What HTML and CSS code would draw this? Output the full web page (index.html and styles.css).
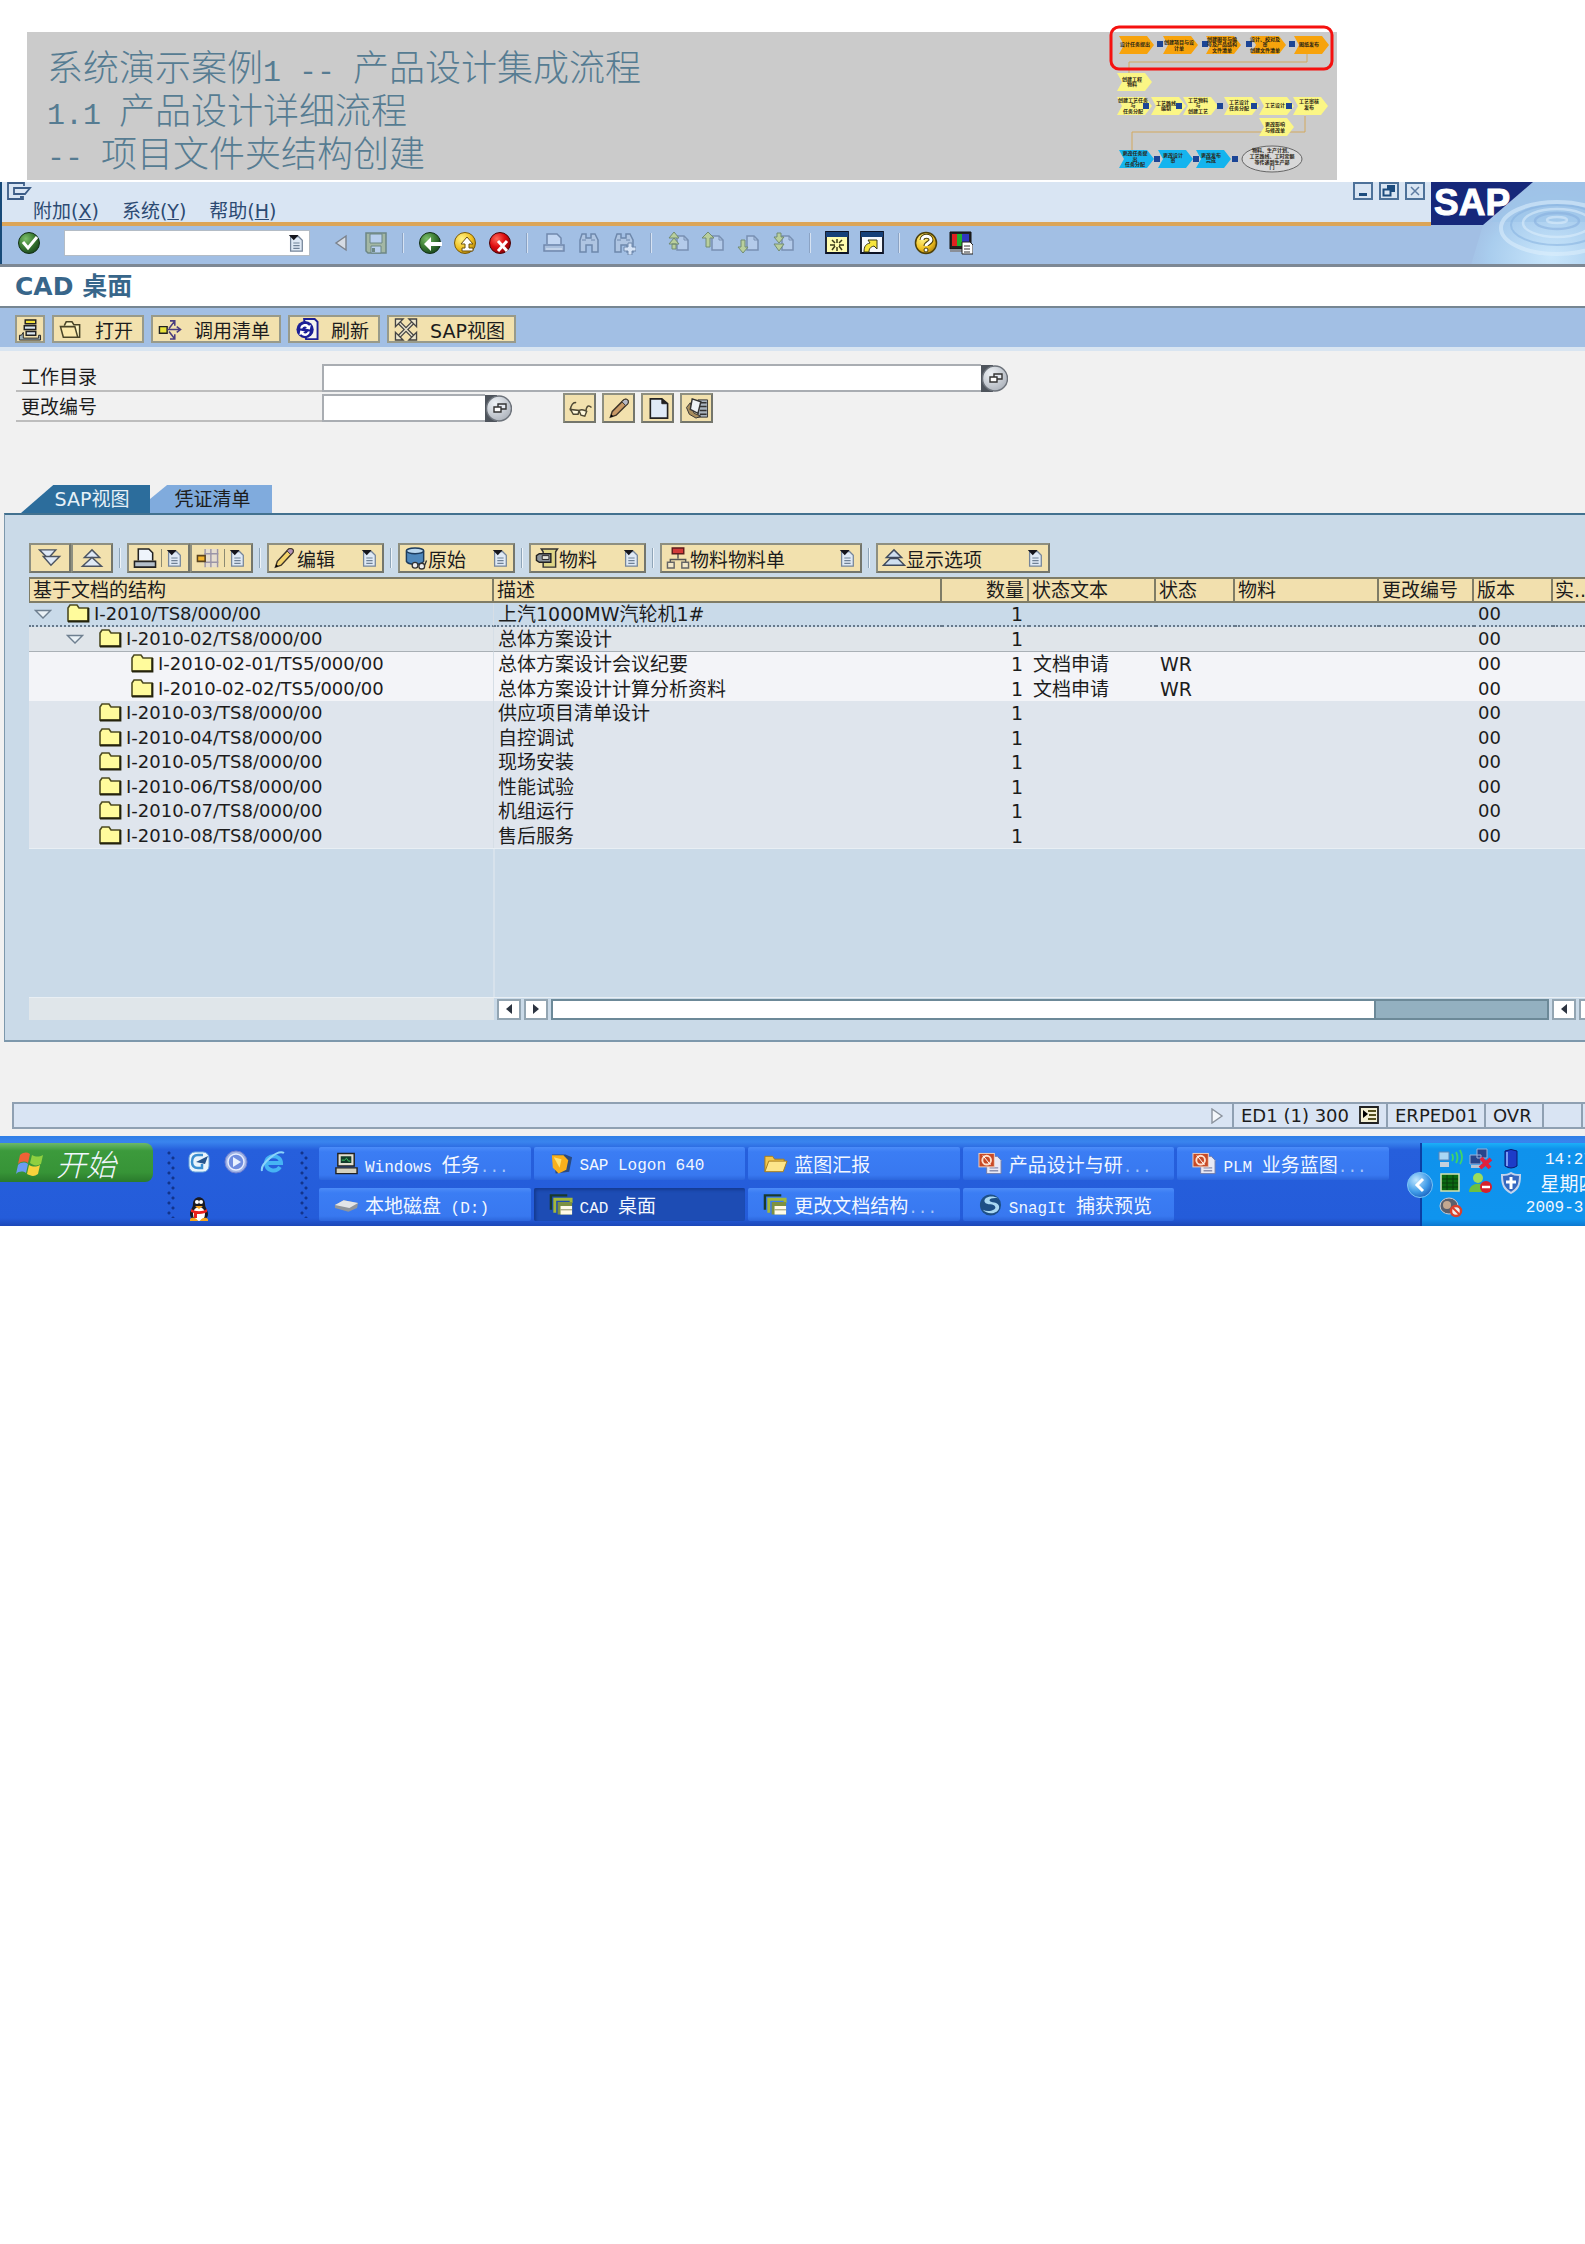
FILE: index.html
```html
<!DOCTYPE html>
<html lang="zh-CN">
<head>
<meta charset="utf-8">
<title>CAD 桌面</title>
<link rel="stylesheet" href="styles.css">
</head>
<body>
<svg class="defs" aria-hidden="true">
  <defs>
    <radialGradient id="gGreen" cx=".35" cy=".3" r=".8"><stop offset="0" stop-color="#7cc06a"/><stop offset=".5" stop-color="#3c7c34"/><stop offset="1" stop-color="#16401a"/></radialGradient>
    <radialGradient id="gYellow" cx=".35" cy=".3" r=".8"><stop offset="0" stop-color="#fff48a"/><stop offset=".6" stop-color="#f0c020"/><stop offset="1" stop-color="#a87a08"/></radialGradient>
    <radialGradient id="gRed" cx=".35" cy=".3" r=".8"><stop offset="0" stop-color="#ff6a5a"/><stop offset=".5" stop-color="#dc0a0e"/><stop offset="1" stop-color="#7c0408"/></radialGradient>
    <radialGradient id="gGrey" cx=".35" cy=".3" r=".8"><stop offset="0" stop-color="#eef2f6"/><stop offset="1" stop-color="#a9afb8"/></radialGradient>
    <radialGradient id="gBlue" cx=".35" cy=".3" r=".8"><stop offset="0" stop-color="#bfe6ff"/><stop offset=".6" stop-color="#3f9be8"/><stop offset="1" stop-color="#1559b8"/></radialGradient>
    <radialGradient id="gWater" cx=".7" cy=".9" r=".9"><stop offset="0" stop-color="#c9e6fb"/><stop offset=".6" stop-color="#a9cdee"/><stop offset="1" stop-color="#a2bfe4" stop-opacity="0"/></radialGradient>
  </defs>
  <symbol id="doc" viewBox="0 0 16 20"><path d="M2 3h9l4 4v12H2z" fill="#dfe9f5" stroke="#75859a" stroke-width="1.400"/><path d="M5 10h7M5 13h7M5 16h7" stroke="#6f8196" stroke-width="1.300"/><path d="M0 1h11L5.500 7z" fill="#15151c"/></symbol>
  <symbol id="folder" viewBox="0 0 24 20"><path d="M2 18V5l2-3h7l2 3h9v13z" fill="#fffb9c" stroke="#4d4b22" stroke-width="1.600"/><path d="M22.500 5v13.500H2" fill="none" stroke="#24230c" stroke-width="1.800"/></symbol>
  <symbol id="tri" viewBox="0 0 18 12"><path d="M1.500 1.500h15L9 9z" fill="#eaf1f6" stroke="#6e7f90" stroke-width="1.400"/></symbol>
  <symbol id="page" viewBox="0 0 24 24"><path d="M11 5h7l4 4v10H11z" fill="#b4cbea" stroke="#7890b2" stroke-width="1.500"/><path d="M18 5v4h4" fill="none" stroke="#7890b2"/></symbol>
  <symbol id="bino" viewBox="0 0 24 24"><path d="M3 21V9l2-6h4v4h5V3h4l3 6v12h-6v-7H9v7z" fill="#afc5e2" stroke="#6e88ac" stroke-width="1.500"/><path d="M5 9h4m5 0h4" stroke="#6e88ac"/></symbol>
  <symbol id="ppt" viewBox="0 0 26 24"><path d="M9 4h11l4 4v14H9z" fill="#e9e9f4" stroke="#6f7aa8"/><path d="M12 16h9M12 19h9" stroke="#8a8fb0" stroke-width="1.500"/><rect x="1" y="1" width="16" height="14" fill="#c84a26" stroke="#f0d0c0"/><circle cx="9" cy="8" r="4.500" fill="none" stroke="#ffe0cc" stroke-width="2"/><path d="M5 3l8 10" stroke="#fff"/></symbol>
  <symbol id="sapwin" viewBox="0 0 26 24"><path d="M2 17V2h17" fill="none" stroke="#193a2c" stroke-width="2.500"/><path d="M6 20V6h17v4" fill="none" stroke="#a4b838" stroke-width="3"/><path d="M9 9h15v13H9z" fill="#7d9142"/><path d="M12 13h12v9H12z" fill="#fffbe8"/><path d="M12 17h12" stroke="#8b8b60"/></symbol>
  <symbol id="arr" viewBox="0 0 36 19"><path d="M0 0H28L35 9 28 18H0L5 9z"/></symbol>
</svg>

<header class="slide">
  <h1>系统演示案例<span class="latin">1 -- </span>产品设计集成流程</h1>
  <h2><span class="latin">1.1 </span>产品设计详细流程</h2>
  <h2><span class="latin">-- </span>项目文件夹结构创建</h2>
  <svg class="flowmap" viewBox="0 0 230 152" role="img" aria-label="流程图">
    <path d="M200 30v8H22v12M198 92v16H25v18" fill="none" stroke="#d3a95e"/>
    <g fill="#f7a30c"><use href="#arr" x="11" y="12" width="38" height="19"/><use href="#arr" x="55" y="12" width="38" height="19"/><use href="#arr" x="98" y="12" width="38" height="19"/><use href="#arr" x="143" y="12" width="38" height="19"/><use href="#arr" x="186" y="12" width="38" height="19"/></g>
    <g fill="#fbf685"><use href="#arr" x="10" y="49" width="36" height="19"/><use href="#arr" x="10" y="73" width="36" height="19"/><use href="#arr" x="44" y="73" width="36" height="19"/><use href="#arr" x="76" y="73" width="36" height="19"/><use href="#arr" x="117" y="73" width="36" height="19"/><use href="#arr" x="152" y="73" width="36" height="19"/><use href="#arr" x="186" y="73" width="36" height="19"/><use href="#arr" x="152" y="94" width="36" height="19"/></g>
    <g fill="#15b4ee"><use href="#arr" x="12" y="126" width="36" height="19"/><use href="#arr" x="51" y="126" width="36" height="19"/><use href="#arr" x="89" y="126" width="36" height="19"/></g>
    <g fill="#1c4596"><path d="M50 17h6v6h-6zM95 17h6v6h-6zM139 17h6v6h-6zM182 17h6v6h-6zM36 79h6v6h-6zM69 79h6v6h-6zM110 79h6v6h-6zM144 79h6v6h-6zM179 79h6v6h-6zM47 132h6v6h-6zM86 132h6v6h-6zM125 132h6v6h-6z"/></g>
    <ellipse cx="165" cy="135" rx="30" ry="13" fill="#d8d8d8" stroke="#666"/>
    <g class="maptext" text-anchor="middle">
      <text x="28" y="22">设计任务提出</text><text x="72" y="20">创建项目与设</text><text x="72" y="26">计单</text><text x="115" y="17">创建图号与编</text><text x="115" y="22">号及产品结构</text><text x="115" y="28">文件清单</text><text x="158" y="17">设计、校对及</text><text x="158" y="22">审</text><text x="158" y="28">创建文件清单</text><text x="202" y="22">图纸发布</text>
      <text x="25" y="57">创建工程</text><text x="25" y="62">物料</text><text x="26" y="78">创建工艺任务</text><text x="26" y="83">与</text><text x="26" y="89">任务分配</text><text x="59" y="81">工艺路线</text><text x="59" y="86">编制</text><text x="91" y="78">工艺物料</text><text x="91" y="83">与</text><text x="91" y="89">创建工艺</text><text x="132" y="80">工艺设计</text><text x="132" y="86">任务分配</text><text x="168" y="83">工艺设计</text><text x="202" y="79">工艺审核</text><text x="202" y="85">发布</text><text x="168" y="102">更改影响</text><text x="168" y="108">与修改单</text>
      <text x="28" y="131">更改任务提</text><text x="28" y="137">出</text><text x="28" y="142">任务分配</text><text x="66" y="133">更改设计</text><text x="66" y="138">审</text><text x="104" y="133">更改发布</text><text x="104" y="138">完成</text><text x="165" y="128">物料、生产计划、</text><text x="165" y="134">工艺路线、工时定额</text><text x="165" y="140">等传递到生产部</text><text x="165" y="145">门</text>
    </g>
    <rect x="4" y="3" width="221" height="42" rx="8" fill="none" stroke="#f5110f" stroke-width="3"/>
  </svg>
</header>

<main class="sap">
  <div class="top">
    <div class="top-left">
      <div class="titlebar">
        <div class="menus">
          <svg class="sysicon" viewBox="0 0 26 18" aria-hidden="true"><path d="M14 15h3v2H2V1h16v3" fill="none" stroke="#3c5c86" stroke-width="1.800"/><path d="M8 6h16l-5 6H8z" fill="#dbe6f4" stroke="#3c5c86" stroke-width="1.800"/></svg>
          <nav class="menu"><a href="#">附加(<u>X</u>)</a><a href="#">系统(<u>Y</u>)</a><a href="#">帮助(<u>H</u>)</a></nav>
        </div>
        <div class="winbtns">
          <button aria-label="最小化"><svg viewBox="0 0 18 16"><path d="M5 10h8v3H5z" fill="#1d4c7e"/></svg></button>
          <button aria-label="还原"><svg viewBox="0 0 18 16"><path d="M7 2h8v7H7z" fill="#1d4c7e"/><path d="M3.500 6.500h7v6h-7z" fill="#dbe6f4" stroke="#1d4c7e" stroke-width="2"/></svg></button>
          <button aria-label="关闭"><svg viewBox="0 0 18 16"><path d="M5 4l8 8m0-8l-8 8" stroke="#5d7ca3" stroke-width="1.500"/></svg></button>
        </div>
      </div>
      <div class="stdbar">
        <button class="ib" aria-label="确认"><svg viewBox="0 0 24 24"><circle cx="12" cy="12" r="10.500" fill="url(#gGreen)" stroke="#123016"/><path d="M6 11l5 6 9-11" fill="none" stroke="#fff" stroke-width="3"/></svg></button>
        <div class="cmd"><input aria-label="命令"><svg class="dd"><use href="#doc"/></svg></div>
        <button class="ib" aria-label="隐藏"><svg viewBox="0 0 24 24"><path d="M17 5v14L7 12z" fill="#d5dbe4" stroke="#7b828c" stroke-width="1.400"/></svg></button>
        <button class="ib" aria-label="保存"><svg viewBox="0 0 24 24"><path d="M2 2h20v20H4l-2-2z" fill="#a3b7a4" stroke="#6d8784" stroke-width="1.500"/><path d="M6 3h12v9H6zM7 15h10v7H7z" fill="#b8cfee" stroke="#6d8784"/><path d="M8 17h3v4H8z" fill="#6d8784"/></svg></button>
        <i class="sep"></i>
        <button class="ib" aria-label="返回"><svg viewBox="0 0 24 24"><circle cx="12" cy="12" r="10.500" fill="url(#gGreen)" stroke="#123016"/><path d="M6 13l7-7v5h11v4H13v5z" fill="#fff"/></svg></button>
        <button class="ib" aria-label="退出"><svg viewBox="0 0 24 24"><circle cx="12" cy="12" r="10.500" fill="url(#gYellow)" stroke="#7a5a08"/><path d="M14 6l6 7h-4v4h4v3H9v-3h3v-4H8z" fill="#fff" stroke="#6b500c"/></svg></button>
        <button class="ib" aria-label="取消"><svg viewBox="0 0 24 24"><circle cx="12" cy="12" r="10.500" fill="url(#gRed)" stroke="#4c0406"/><path d="M10 10l9 10m0-10l-9 10" stroke="#fff" stroke-width="3"/></svg></button>
        <i class="sep"></i>
        <button class="ib" aria-label="打印"><svg viewBox="0 0 24 24"><path d="M5 13V3h10l4 4v6" fill="#c2d6f2" stroke="#7189ad" stroke-width="1.500"/><path d="M2 14h20v6H2z" fill="#a9bfdd" stroke="#7189ad" stroke-width="1.500"/><path d="M4 18h16" stroke="#dde8f6"/></svg></button>
        <button class="ib" aria-label="查找"><svg><use href="#bino"/></svg></button>
        <button class="ib" aria-label="继续查找"><svg viewBox="0 0 24 24"><use href="#bino"/><path d="M16 12h4v4h4v4h-4v4h-4v-4h-4v-4h4z" fill="#d5e3f6" stroke="#6e88ac"/></svg></button>
        <i class="sep"></i>
        <button class="ib" aria-label="首页"><svg viewBox="0 0 24 24"><use href="#page"/><path d="M8 1l5 6H3zM8 7l5 6H3zM6 13h4v5H6z" fill="#b9cf9c" stroke="#728c72"/></svg></button>
        <button class="ib" aria-label="上一页"><svg viewBox="0 0 24 24"><use href="#page"/><path d="M7 1l6 6h-4v9H5V7H1z" fill="#b9cf9c" stroke="#728c72"/></svg></button>
        <button class="ib" aria-label="下一页"><svg viewBox="0 0 24 24"><use href="#page"/><path d="M5 9h4v7h3l-5 6-5-6h3z" fill="#b9cf9c" stroke="#728c72"/></svg></button>
        <button class="ib" aria-label="末页"><svg viewBox="0 0 24 24"><use href="#page"/><path d="M6 2h4v4h3l-5 6-5-6h3zM3 13h10l-5 7z" fill="#b9cf9c" stroke="#728c72"/></svg></button>
        <i class="sep"></i>
        <button class="ib" aria-label="新建会话"><svg viewBox="0 0 24 24"><path d="M1 1h22v21H1z" fill="#fffcae" stroke="#0c1224" stroke-width="1.800"/><path d="M1 1h22v5H1z" fill="#164078"/><path d="M12 8v4m0 4v4m-7-6h5m4 0h5M7 9l3 3m4 3l3 4m0-10l-3 3m-4 3l-3 4" stroke="#3b3a18" stroke-width="1.500"/></svg></button>
        <button class="ib" aria-label="快捷方式"><svg viewBox="0 0 24 24"><path d="M1 1h22v21H1z" fill="#f7f9fc" stroke="#0c1224" stroke-width="1.800"/><path d="M1 1h22v5H1z" fill="#164078"/><path d="M4 21c0-6 2-8 6-9l-2-3h9v9l-3-3c-4 1-5 3-5 6z" fill="#f8e63c" stroke="#3b3a18"/></svg></button>
        <i class="sep"></i>
        <button class="ib" aria-label="帮助"><svg viewBox="0 0 24 24"><circle cx="12" cy="12" r="10.500" fill="url(#gYellow)" stroke="#4d400a" stroke-width="1.500"/><path d="M8 9c0-5 9-5 9 0 0 3-5 3-5 6" fill="none" stroke="#4d400a" stroke-width="5"/><path d="M8 9c0-5 9-5 9 0 0 3-5 3-5 6" fill="none" stroke="#fff" stroke-width="3"/><circle cx="12" cy="19" r="2" fill="#fff" stroke="#4d400a"/></svg></button>
        <button class="ib" aria-label="布局"><svg viewBox="0 0 24 24"><path d="M1 1h21v17H1z" fill="#222" stroke="#111"/><path d="M3 3h5v12H3z" fill="#e02020"/><path d="M8 3h5v12H8z" fill="#20b030"/><path d="M13 3h7v12h-7z" fill="#3038c0"/><path d="M1 18h15v3H1z" fill="#8a8f98"/><path d="M13 11h8l3 3v9H13z" fill="#fff" stroke="#222"/><path d="M15 15h6m-6 3h6m-6 3h6" stroke="#333"/></svg></button>
      </div>
    </div>
    <svg class="logo" viewBox="0 0 154 83" preserveAspectRatio="xMaxYMin slice" role="img" aria-label="SAP">
      <rect width="154" height="83" fill="#a2bfe4"/><path d="M102 0h52v83H40L52 43z" fill="url(#gWater)"/><path d="M102 0h52v40H60z" fill="#9cc5ea" opacity=".6"/>
      <g fill="none" stroke="#dff0fd" stroke-width="2.500" opacity=".55"><ellipse cx="126" cy="38" rx="10" ry="3"/><ellipse cx="126" cy="39" rx="22" ry="8" stroke="#86aede"/><ellipse cx="126" cy="41" rx="34" ry="14"/><ellipse cx="126" cy="43" rx="46" ry="20" stroke="#86b2e0" stroke-width="2"/><ellipse cx="126" cy="46" rx="56" ry="26" stroke-width="4"/></g>
      <path d="M0 0h102L52 43H0z" fill="#16287a"/>
      <text x="3" y="33" class="logotext">SAP</text>
    </svg>
  </div>

  <h2 class="apptitle">CAD 桌面</h2>

  <div class="appbar">
    <button class="btn sq" aria-label="列表"><svg class="ic" viewBox="0 0 24 24"><path d="M7 2h11v4H7z" fill="#f4e23c" stroke="#222" stroke-width="1.500"/><path d="M6 8h12v4H6zM8 14h10v4H8z" fill="#dbe6ee" stroke="#222" stroke-width="1.500"/><path d="M5 15v6h16v-3h2v5H1v-5h2z" fill="#9db0b8" stroke="#222"/></svg></button>
    <button class="btn"><svg class="ic" viewBox="0 0 24 24"><path d="M5 8l2-4h6l2 3h6v13h-3" fill="#fff6c4" stroke="#4a4528" stroke-width="1.600"/><path d="M1 9h15l3 11H4z" fill="#fbe9ac" stroke="#4a4528" stroke-width="1.600"/></svg>打开</button>
    <button class="btn"><svg class="ic" viewBox="0 0 24 24"><path d="M1 9h8v7H1z" fill="#e9e23a" stroke="#222" stroke-width="1.500"/><path d="M9 12h13m-3-3l4 3-4 3M11 11l6-8m-5 0h5v5M11 14l6 8m-5 0h5v-5" fill="none" stroke="#4a3c80" stroke-width="1.600"/></svg>调用清单</button>
    <button class="btn"><svg class="ic" viewBox="0 0 24 24"><path d="M9 1h11l3 3v18H11z" fill="#f5f4ee" stroke="#1c1f96" stroke-width="2"/><circle cx="10" cy="12" r="9" fill="#1c1f96"/><path d="M5 11c0-5 7-6 9-3l2-1-1 5-5-1 2-1c-2-2-4-1-5 1zM15 14c-1 5-6 6-9 3l-2 1 1-5 5 1-2 1c2 2 4 1 5-1z" fill="#fff"/></svg>刷新</button>
    <button class="btn"><svg class="ic" viewBox="0 0 24 24"><path d="M4 4l16 16M20 4L4 20" stroke="#444" stroke-width="4"/><path d="M4 4l16 16M20 4L4 20" stroke="#e8e2cc" stroke-width="1.500"/><path d="M1 9V1h8zM15 1h8v8zM23 15v8h-8zM9 23H1v-8z" fill="#eee7cc" stroke="#444" stroke-width="1.400"/></svg>SAP视图</button>
  </div>

  <form class="form">
    <div class="row">
      <label for="dir">工作目录</label><input id="dir" class="long"><button type="button" class="match" aria-label="选择"><svg viewBox="0 0 27 27"><path d="M0 0h12v27H0z" fill="#4e545c"/><circle cx="14" cy="13.500" r="12.500" fill="url(#gGrey)" stroke="#6c727a" stroke-width="1.400"/><path d="M13 9h8v5h-8z" fill="#e4e9f0" stroke="#333" stroke-width="1.400"/><path d="M9 12h7v5H9z" fill="#fff" stroke="#333" stroke-width="1.400"/></svg></button>
    </div>
    <div class="row">
      <label for="chg">更改编号</label><input id="chg" class="short"><button type="button" class="match" aria-label="选择"><svg viewBox="0 0 27 27"><path d="M0 0h12v27H0z" fill="#4e545c"/><circle cx="14" cy="13.500" r="12.500" fill="url(#gGrey)" stroke="#6c727a" stroke-width="1.400"/><path d="M13 9h8v5h-8z" fill="#e4e9f0" stroke="#333" stroke-width="1.400"/><path d="M9 12h7v5H9z" fill="#fff" stroke="#333" stroke-width="1.400"/></svg></button>
      <div class="docbtns">
        <button type="button" class="btn tool" aria-label="显示"><svg class="ic" viewBox="0 0 24 24"><g fill="#fff8dc" stroke="#4e4834" stroke-width="1.500"><path d="M2 14c0-5 3-9 6-8M18 15c1-6 3-7 6-4" fill="none"/><path d="M2 13l3 5h5l1-4zM11 14l2 5 4 1 2-5c-3-2-6-2-8-1z"/></g></svg></button>
        <button type="button" class="btn tool" aria-label="更改"><svg class="ic" viewBox="0 0 24 24"><path d="M3 21l2-6L17 3c3-2 6 1 4 4L9 19z" fill="#c99a66" stroke="#3e3428" stroke-width="1.500"/><path d="M15 5l2-2c3-2 6 1 4 4l-2 2z" fill="#b6b9c4" stroke="#3e3428"/><path d="M3 21l1-3 2 2z"/></svg></button>
        <button type="button" class="btn tool" aria-label="创建"><svg class="ic" viewBox="0 0 24 24"><path d="M4 2h12l6 5v15H4z" fill="#dfeaf6" stroke="#222" stroke-width="1.700"/><path d="M16 2v5h6" fill="#222" stroke="#222"/></svg></button>
        <button type="button" class="btn tool" aria-label="附件"><svg class="ic" viewBox="0 0 24 24"><path d="M13 3h10v18H13z" fill="#a9b3bd" stroke="#333"/><path d="M15 6h7m-7 4h7m-7 4h7m-7 4h7" stroke="#333" stroke-width="1.500"/><path d="M1 11l4-5 4 11 7 3-5 2-7-4z" fill="#a98e5e" stroke="#333"/><path d="M7 2l9 3-3 12-8-4z" fill="#eef2f6" stroke="#333" stroke-width="1.500"/></svg></button>
      </div>
    </div>
  </form>

  <div class="tabs" role="tablist">
    <button class="tab on" role="tab" aria-selected="true">SAP视图</button><button class="tab off" role="tab" aria-selected="false">凭证清单</button>
  </div>

  <section class="panel">
    <div class="gridbar">
      <div class="grp">
        <button class="btn exp" aria-label="展开"><svg class="ic" viewBox="0 0 24 24"><g fill="#dfe9f6" stroke="#4c5462" stroke-width="1.500"><path d="M1 3h17l-8 9z"/><path d="M5 10h17l-9 9z"/></g></svg></button>
        <button class="btn exp" aria-label="折叠"><svg class="ic" viewBox="0 0 24 24"><g fill="#dfe9f6" stroke="#4c5462" stroke-width="1.500"><path d="M4 11h16l-8-8z"/><path d="M2 20h20L12 11z"/></g></svg></button>
      </div>
      <i class="gsep"></i>
      <div class="grp">
        <button class="btn pair" aria-label="打印"><svg class="ic" viewBox="0 0 24 24"><path d="M5 14V2h11l4 4v8" fill="#eef4fb" stroke="#222" stroke-width="1.600"/><path d="M1 15h22v6H1z" fill="#b4bfca" stroke="#222" stroke-width="1.600"/></svg><i></i><svg class="dd"><use href="#doc"/></svg></button>
        <button class="btn pair" aria-label="布局"><svg class="ic" viewBox="0 0 24 24"><path d="M9 2h13v19H9z" fill="#e6ddcf"/><path d="M9 2v19M15 2v19M22 2v19M8 7h15M8 16h15" stroke="#9b95a8" stroke-width="1.500"/><path d="M1 9h8v6H1z" fill="#f5b52c" stroke="#5a4420" stroke-width="1.600"/></svg><i></i><svg class="dd"><use href="#doc"/></svg></button>
      </div>
      <i class="gsep"></i>
      <button class="btn drop"><svg class="ic" viewBox="0 0 24 24"><path d="M2 21l2-6L16 2c3-1 6 1 4 4L8 19z" fill="#f3d26a" stroke="#3e3428" stroke-width="1.500"/><path d="M14 4l2-2c3-1 6 1 4 4l-2 2z" fill="#b392b8" stroke="#3e3428"/><path d="M2 21l1-3 2 2z"/></svg>编辑<svg class="dd"><use href="#doc"/></svg></button>
      <i class="gsep"></i>
      <button class="btn drop"><svg class="ic" viewBox="0 0 24 24"><path d="M2 4v11c2 4 15 4 18 0V4" fill="#4f88bc" stroke="#1d3c5e" stroke-width="1.500"/><ellipse cx="11" cy="4" rx="9" ry="3" fill="#b9d6ee" stroke="#1d3c5e" stroke-width="1.500"/><g fill="#eee" stroke="#333" stroke-width="1.400"><circle cx="11" cy="19" r="3"/><circle cx="18" cy="20" r="3"/><path d="M21 19l2-5" fill="none"/></g></svg>原始<svg class="dd"><use href="#doc"/></svg></button>
      <i class="gsep"></i>
      <button class="btn drop"><svg class="ic" viewBox="0 0 24 24"><path d="M6 2h17l-2 3v16H8V5z" fill="#dfd687" stroke="#333" stroke-width="1.500"/><path d="M1 9l3-2h12v9H4l-3-2z" fill="#8d959c" stroke="#222" stroke-width="1.500"/><path d="M7 9h7v4H7z" fill="#e4e4dc" stroke="#222"/></svg>物料<svg class="dd"><use href="#doc"/></svg></button>
      <i class="gsep"></i>
      <button class="btn drop wide"><svg class="ic" viewBox="0 0 24 24"><path d="M12 7v5M4 17v-4h16v4" fill="none" stroke="#555" stroke-width="1.500"/><path d="M6 1h12v6H6z" fill="#d23a3a" stroke="#5e1c1c" stroke-width="1.500"/><path d="M1 16h7v6H1zM16 16h7v6h-7z" fill="#f3e8c8" stroke="#666" stroke-width="1.500"/></svg>物料物料单<svg class="dd"><use href="#doc"/></svg></button>
      <i class="gsep"></i>
      <button class="btn drop mid"><svg class="ic" viewBox="0 0 24 24"><g fill="#cfdff0" stroke="#3f4a5c" stroke-width="1.500"><path d="M4 11h16l-8-8z"/><path d="M1 19h22l-7-7H8z"/></g></svg>显示选项<svg class="dd"><use href="#doc"/></svg></button>
    </div>

    <table class="grid">
      <colgroup><col class="c-tree"><col><col class="c-qty"><col class="c-stext"><col class="c-st"><col class="c-mat"><col class="c-chg"><col class="c-ver"><col class="c-last"></colgroup>
      <thead><tr><th>基于文档的结构</th><th>描述</th><th class="num">数量</th><th>状态文本</th><th>状态</th><th>物料</th><th>更改编号</th><th>版本</th><th>实..</th></tr></thead>
      <tbody>
        <tr class="sel"><td class="l0"><svg class="tw"><use href="#tri"/></svg><svg class="fo"><use href="#folder"/></svg>I-2010/TS8/000/00</td><td>上汽1000MW汽轮机1#</td><td class="num">1</td><td></td><td></td><td></td><td></td><td>00</td><td></td></tr>
        <tr class="open"><td class="l1"><svg class="tw"><use href="#tri"/></svg><svg class="fo"><use href="#folder"/></svg>I-2010-02/TS8/000/00</td><td>总体方案设计</td><td class="num">1</td><td></td><td></td><td></td><td></td><td>00</td><td></td></tr>
        <tr class="leaf"><td class="l3"><svg class="fo"><use href="#folder"/></svg>I-2010-02-01/TS5/000/00</td><td>总体方案设计会议纪要</td><td class="num">1</td><td>文档申请</td><td>WR</td><td></td><td></td><td>00</td><td></td></tr>
        <tr class="leaf"><td class="l3"><svg class="fo"><use href="#folder"/></svg>I-2010-02-02/TS5/000/00</td><td>总体方案设计计算分析资料</td><td class="num">1</td><td>文档申请</td><td>WR</td><td></td><td></td><td>00</td><td></td></tr>
        <tr><td class="l2"><svg class="fo"><use href="#folder"/></svg>I-2010-03/TS8/000/00</td><td>供应项目清单设计</td><td class="num">1</td><td></td><td></td><td></td><td></td><td>00</td><td></td></tr>
        <tr><td class="l2"><svg class="fo"><use href="#folder"/></svg>I-2010-04/TS8/000/00</td><td>自控调试</td><td class="num">1</td><td></td><td></td><td></td><td></td><td>00</td><td></td></tr>
        <tr><td class="l2"><svg class="fo"><use href="#folder"/></svg>I-2010-05/TS8/000/00</td><td>现场安装</td><td class="num">1</td><td></td><td></td><td></td><td></td><td>00</td><td></td></tr>
        <tr><td class="l2"><svg class="fo"><use href="#folder"/></svg>I-2010-06/TS8/000/00</td><td>性能试验</td><td class="num">1</td><td></td><td></td><td></td><td></td><td>00</td><td></td></tr>
        <tr><td class="l2"><svg class="fo"><use href="#folder"/></svg>I-2010-07/TS8/000/00</td><td>机组运行</td><td class="num">1</td><td></td><td></td><td></td><td></td><td>00</td><td></td></tr>
        <tr><td class="l2"><svg class="fo"><use href="#folder"/></svg>I-2010-08/TS8/000/00</td><td>售后服务</td><td class="num">1</td><td></td><td></td><td></td><td></td><td>00</td><td></td></tr>
      </tbody>
    </table>
    <div class="blank"><div></div></div>
    <div class="scroll">
      <div class="scroll-left"></div>
      <button class="sb" aria-label="向左"><svg viewBox="0 0 10 12"><path d="M8 1v10L2 6z" fill="#2c3440"/></svg></button>
      <button class="sb" aria-label="向右"><svg viewBox="0 0 10 12"><path d="M2 1v10l6-5z" fill="#2c3440"/></svg></button>
      <div class="track"><div class="thumb"></div></div>
      <button class="sb" aria-label="向左"><svg viewBox="0 0 10 12"><path d="M8 1v10L2 6z" fill="#2c3440"/></svg></button>
      <button class="sb cut" aria-label="向右"></button>
    </div>
  </section>

  <footer class="status">
    <div class="msg"><svg viewBox="0 0 14 16"><path d="M2 1v14l10-7z" fill="#f3f6fa" stroke="#8a929c" stroke-width="1.400"/></svg></div>
    <div class="cell sys">ED1 (1) 300 <svg viewBox="0 0 21 19"><path d="M1 1h18v16H1z" fill="#f4f0d4" stroke="#222" stroke-width="1.800"/><path d="M4 4v8l5-4z"/><path d="M9 5h8m-7 4h7m-8 4h8" stroke="#55501e" stroke-width="2"/></svg></div>
    <div class="cell srv">ERPED01</div>
    <div class="cell ovr">OVR</div>
    <div class="cell gap"></div>
    <div class="cell end"></div>
  </footer>
</main>

<div class="taskbar">
  <button class="start"><svg viewBox="0 0 28 28"><path d="M3 6c4-3 7-3 10-1l-2 9c-3-2-6-2-10 1z" fill="#ee6236"/><path d="M15 6c4 2 7 2 11 0l-2 9c-4 2-7 2-11-1z" fill="#8fd040"/><path d="M1 16c3-3 7-3 10-1l-2 9c-3-2-7-2-10 1z" fill="#6c9cf2"/><path d="M12 16c4 2 7 2 11 0l-2 9c-4 3-7 2-11 0z" fill="#f8d23c"/></svg>开始</button>
  <div class="grip"></div>
  <div class="quick">
    <a href="#" aria-label="桌面"><svg viewBox="0 0 26 26"><rect x="3" y="3" width="20" height="20" rx="6" fill="#e9f4fc" stroke="#6ba6dc"/><path d="M17 6h-5c-5 0-6 3-6 7s2 6 6 6h4v-4" fill="none" stroke="#3a8fd0" stroke-width="2.500"/><path d="M10 13l12-6-3 8z" fill="#24548c"/></svg></a>
    <a href="#" aria-label="播放器"><svg viewBox="0 0 26 26"><circle cx="13" cy="13" r="11" fill="#9fb4e6" stroke="#6f7fd0"/><circle cx="13" cy="13" r="8" fill="#6f8ee0" stroke="#e6ecff" stroke-width="1.500"/><path d="M10 8l8 5-8 5z" fill="#e8f2ff"/></svg></a>
    <a href="#" aria-label="浏览器"><svg viewBox="0 0 26 26"><path d="M20 18c-4 6-14 4-14-4 0-9 15-9 15 0H8" fill="none" stroke="#46b4f4" stroke-width="4"/><path d="M2 22C0 15 18 0 24 4" fill="none" stroke="#8cd4fa" stroke-width="2"/></svg></a>
    <a href="#" aria-label="QQ"><svg viewBox="0 0 26 26"><path d="M4 18c0-4 3-6 3-10 0-9 12-9 12 0 0 4 3 6 3 10 0 9-18 9-18 0z" fill="#1a1a22"/><ellipse cx="13" cy="18" rx="6" ry="7" fill="#fff"/><circle cx="11" cy="6" r="2" fill="#fff"/><circle cx="15" cy="6" r="2" fill="#fff"/><path d="M9 10h8l-4 3z" fill="#f8a51c"/><path d="M5 13c5 3 11 3 16 0v3c-4 2-7 2-10 2v4H8v-5l-3-1z" fill="#e8201c"/><path d="M4 23c2-2 6-2 8 2H4zM22 23c-2-2-6-2-8 2h8z" fill="#f8a51c"/></svg></a>
  </div>
  <div class="grip"></div>
  <div class="tasks">
    <button><svg viewBox="0 0 26 24"><path d="M4 1h17v13H4z" fill="#e3e0d0" stroke="#222" stroke-width="1.500"/><path d="M7 4h11v7H7z" fill="#123c2a"/><path d="M8 8h3l2-2 2 3h2" fill="none" stroke="#4c6"/><path d="M2 16h22v6H2z" fill="#d6d2be" stroke="#222" stroke-width="1.500"/></svg><span><b>Windows </b>任务<b class="dots">...</b></span></button>
    <button><svg viewBox="0 0 26 24"><path d="M3 2h14l7 3-3 15-14 2z" fill="#2a4a80"/><path d="M3 3h12l5 5-2 10-8 4-6-6z" fill="#f9b01c"/><path d="M5 5l8 2-2 9z" fill="#ffe170"/></svg><span><b>SAP Logon 640</b></span></button>
    <button><svg viewBox="0 0 26 24"><path d="M2 20V4h8l2 3h10v4" fill="#f2c64c" stroke="#a87c18"/><path d="M2 20l4-11h19l-4 11z" fill="#fde58a" stroke="#a87c18"/></svg><span>蓝图汇报</span></button>
    <button><svg><use href="#ppt"/></svg><span>产品设计与研<b class="dots">...</b></span></button>
    <button><svg><use href="#ppt"/></svg><span><b>PLM </b>业务蓝图<b class="dots">...</b></span></button>
    <button><svg viewBox="0 0 26 24"><path d="M1 12l9-5 15 3-1 5-9 4-14-4z" fill="#8f959c"/><path d="M1 12l9-5 15 3-9 5z" fill="#e2e5e8"/></svg><span>本地磁盘<b> (D:)</b></span></button>
    <button class="active"><svg><use href="#sapwin"/></svg><span><b>CAD </b>桌面</span></button>
    <button><svg><use href="#sapwin"/></svg><span>更改文档结构<b class="dots">...</b></span></button>
    <button><svg viewBox="0 0 26 24"><circle cx="13" cy="12" r="11" fill="#1d4f86"/><path d="M21 5C14 1 5 4 7 9c2 4 10 1 11 5 1 3-7 6-13 3 5 6 17 4 17-3 0-6-10-4-10-7 0-2 5-3 9-2z" fill="#a9d8f2"/></svg><span><b>SnagIt </b>捕获预览</span></button>
  </div>
  <div class="tray">
    <button class="chev" aria-label="显示隐藏的图标"><svg viewBox="0 0 28 28"><circle cx="14" cy="14" r="12.500" fill="url(#gBlue)" stroke="#7cc4f6"/><path d="M17 8l-6 6 6 6" fill="none" stroke="#fff" stroke-width="3"/></svg></button>
    <div class="trayicons">
      <svg viewBox="0 0 26 22"><path d="M1 4h10v8H1z" fill="#a9d6f4" stroke="#5a86b8"/><path d="M2 14h9v5H2z" fill="#c3d0dc"/><path d="M14 6q2 4 0 7M18 4q3 6 0 11M22 2q4 8 0 14" fill="none" stroke="#3fd468" stroke-width="1.800"/></svg>
      <svg viewBox="0 0 26 22"><path d="M9 1h10v9H9zM2 7h11v9H2z" fill="#27458c" stroke="#9cb0d8"/><path d="M3 17h10v3H3z" fill="#b8c4d4"/><path d="M13 10l9 10m1-9L12 20" stroke="#e2203c" stroke-width="4"/></svg>
      <svg viewBox="0 0 26 22"><path d="M7 3q6-3 12 0v15q-6 4-12 0z" fill="#1d3cc8" stroke="#0a1a70"/><path d="M9 4v14" stroke="#7a9cf4" stroke-width="2"/></svg>
      <svg viewBox="0 0 26 22"><path d="M3 2h18v17H3z" fill="#0c6a10" stroke="#d6e4b0" stroke-width="1.500"/><path d="M4 7h16M4 11h16M4 15h16M9 3v15M15 3v15" stroke="#0a3c0c"/></svg>
      <svg viewBox="0 0 26 22"><circle cx="10" cy="6" r="5" fill="#9cdc5c"/><path d="M1 20c0-11 18-11 18 0z" fill="#6cc040"/><circle cx="18" cy="15" r="6" fill="#d8202c"/><path d="M14 15h8" stroke="#fff" stroke-width="2.500"/></svg>
      <svg viewBox="0 0 26 22"><path d="M13 1c3 2 6 2 9 2 0 10-2 14-9 18C6 17 4 13 4 3c3 0 6 0 9-2z" fill="#3568c0" stroke="#c4d4ec" stroke-width="2"/><path d="M13 5v12M8 10h10" stroke="#fff" stroke-width="3"/></svg>
      <svg viewBox="0 0 26 22"><ellipse cx="11" cy="10" rx="9" ry="8" fill="#5a5f6c" stroke="#c8ccd4"/><circle cx="9" cy="9" r="4" fill="#c4a890"/><circle cx="18" cy="15" r="5" fill="#eee" stroke="#d8402c" stroke-width="2.500"/><path d="M15 12l6 6" stroke="#d8402c" stroke-width="2"/></svg>
    </div>
    <div class="clock"><b>14:27</b><span>星期四</span><b>2009-3-12</b></div>
  </div>
</div>
</body>
</html>
```
FILE: styles.css
```css
* { box-sizing: border-box; }
html { background: #fff; }
body {
  margin: 0;
  color: #1c1c1c;
  font-family: "DejaVu Sans", "Noto Sans CJK SC", sans-serif;
  font-size: 19px;
  overflow-x: hidden;
}
button, input { font: inherit; color: inherit; border-radius: 0; }
button { padding: 0; border: 0; background: none; cursor: pointer; }
svg { display: block; flex: none; }
.defs { position: absolute; width: 0; height: 0; }

/* slide heading */
.slide {
  position: relative;
  margin: 32px 248px 2px 27px;
  padding: 12px 20px 7px;
  background: #cbcbcb;
  color: #567c92;
}
.slide h1, .slide h2 {
  margin: 0;
  height: 43px;
  font: 300 36px/43px "Noto Sans CJK SC", sans-serif;
  white-space: nowrap;
}
.slide .latin { font: 30px/1 "Liberation Mono", monospace; white-space: pre; }
.flowmap { position: absolute; right: 0; top: -8px; width: 230px; height: 152px; }
.maptext { font: 700 5px "Noto Sans CJK SC", sans-serif; fill: #2a2414; }

/* window head */
.sap { background: #f1f1f1; overflow: hidden; }
.top { display: grid; grid-template-columns: minmax(0, 1fr) 154px; border-bottom: 3px solid #7d8894; }
.top-left { border-left: 2px solid #174a78; }
.titlebar {
  display: flex;
  justify-content: space-between;
  height: 44px;
  background: #d9e5f3;
  border-bottom: 4px solid #dba558;
}
.sysicon { width: 26px; height: 18px; margin-left: 4px; }
.menu { display: flex; gap: 23px; padding-left: 31px; line-height: 22px; }
.menu a { color: #2c4a72; text-decoration: none; }
.winbtns { display: flex; gap: 8px; padding: 1px 7px 0 0; }
.winbtns button { width: 18px; height: 16px; outline: 2px solid #4d7199; outline-offset: -1px; }
.winbtns svg { width: 18px; height: 16px; }
.stdbar { display: flex; align-items: center; gap: 11px; height: 38px; padding: 0 0 5px 15px; background: #a2bfe4; }
.ib, .ib svg { width: 24px; height: 24px; }
.cmd { display: flex; align-items: center; width: 246px; height: 26px; margin: 0 8px 0 12px; padding-right: 5px; background: #fff; border: 1px solid #b3bcc6; }
.cmd input { flex: 1; min-width: 0; height: 100%; border: 0; outline: 0; background: transparent; }
.dd { width: 16px; height: 18px; }
.sep { width: 2px; height: 20px; margin: 0 3px; background: #d6e2f2; border-left: 1px solid #8ba3c4; }
.logo { width: 154px; height: 82px; }
.logotext { font: 700 37px "Liberation Sans", sans-serif; fill: #fff; stroke: #fff; stroke-width: 1; }
.apptitle {
  margin: 0;
  padding-left: 15px;
  background: #fff;
  border-bottom: 2px solid #768692;
  color: #38668a;
  font-size: 25px;
  line-height: 39px;
  font-weight: 700;
}

/* push buttons */
.btn {
  display: flex;
  align-items: center;
  background: #f2e1ae;
  border: 2px solid #8e8f80;
  border-right-color: #74766c;
  border-bottom-color: #74766c;
  white-space: nowrap;
}
.ic { width: 24px; height: 23px; }
.appbar { display: flex; gap: 7px; height: 43px; padding: 7px 0 0 15px; background: #a2bfe4; border-bottom: 4px solid #d9e5f1; }
.appbar .btn { height: 28px; gap: 12px; padding: 0 9px 0 5px; border-color: #989a8a; }
.appbar .sq { padding: 0 1px; }

/* entry fields */
.form { display: flex; flex-direction: column; gap: 2px; padding: 13px 0 63px 16px; }
.row { display: flex; align-items: center; height: 28px; }
.row label { width: 306px; height: 28px; padding-left: 5px; line-height: 26px; border-bottom: 2px solid #bdbdbd; }
.row input { height: 28px; border: 2px solid #a9adb2; border-right: 0; background: #fff; outline: 0; }
.long { width: 659px; }
.short { width: 163px; }
.match, .match svg { width: 27px; height: 27px; }
.docbtns { display: flex; gap: 6px; padding-left: 51px; }
.tool { width: 33px; height: 30px; justify-content: center; }

/* tabs and panel */
.tabs { display: flex; padding-left: 21px; }
.tab { height: 28px; line-height: 28px; }
.on { width: 129px; padding-left: 13px; background: #2c6d9c; color: #e6f1f8; clip-path: polygon(25% 0, 100% 0, 100% 100%, 0 100%); }
.off { width: 122px; padding-left: 3px; background: #80abdd; clip-path: polygon(14% 0, 100% 0, 100% 100%, 0 100%, 0 50%); }
.panel {
  margin-left: 4px;
  padding: 28px 0 20px 24px;
  background: #cadae8;
  border: 2px solid #7d98ac;
  border-width: 2px 0 2px 1px;
  border-top-color: #42718f;
}
.gridbar { display: flex; gap: 6px; margin-bottom: 4px; }
.gridbar .btn { height: 30px; }
.grp { display: flex; }
.exp { width: 42px; justify-content: center; }
.gsep { width: 2px; height: 20px; margin-top: 5px; background: #eef4f9; border-left: 1px solid #8fa5b8; }
.pair { width: 63px; padding: 0 6px 0 4px; justify-content: space-between; }
.pair i { width: 1px; height: 18px; background: #8c8a72; }
.drop { width: 117px; padding: 0 5px 0 4px; }
.drop .dd { margin-left: auto; }
.wide { width: 202px; }
.mid { width: 174px; }

.grid { width: 100%; table-layout: fixed; border-spacing: 0; }
.c-tree { width: 465px; }
.c-qty { width: 87px; }
.c-stext { width: 127px; }
.c-st { width: 79px; }
.c-mat { width: 144px; }
.c-chg { width: 95px; }
.c-ver { width: 79px; }
.c-last { width: 32px; }
.grid th {
  height: 26px;
  padding: 0 3px;
  background: #f2e0ae;
  border: 2px solid #7f7c66;
  border-left-width: 0;
  font-weight: 400;
  line-height: 22px;
  text-align: left;
  white-space: nowrap;
}
.grid th:first-child { border-left-width: 1px; }
.grid th:last-child { padding: 0 0 0 2px; border-right-width: 0; }
.grid td { height: 24px; padding: 0 4px; line-height: 22px; background: #dfe5ed; white-space: nowrap; }
.grid tr:nth-child(even) td { height: 25px; }
.grid td:nth-child(n+8) { font-size: 18px; }
.grid .num { text-align: right; }
.grid td.num { padding-right: 6px; }
.grid td:first-child { font-size: 18px; border-right: 1px solid #d6dee6; }
.grid .sel td { background: #c9dae9; border-bottom: 2px dotted #66788a; }
.grid .open td { background: #e0e5ea; border-bottom: 1px solid #a9b0b6; }
.grid .leaf td { background: #f3f4f8; }
.grid td:first-child svg { display: inline-block; vertical-align: middle; }
.tw { width: 18px; height: 12px; margin-right: 14px; }
.fo { width: 24px; height: 20px; margin-right: 4px; margin-top: -4px; }
.grid .l0 { padding-left: 5px; }
.grid .l1 { padding-left: 37px; }
.grid .l2 { padding-left: 69px; }
.grid .l3 { padding-left: 101px; }
.blank { height: 149px; border-top: 1px solid #e9eff4; }
.blank div { width: 466px; height: 100%; border-right: 2px solid #d7e2ec; }
.scroll { display: flex; align-items: center; gap: 3px; height: 23px; border-top: 1px solid #e9eff4; }
.scroll-left { width: 465px; height: 22px; background: #e0e6ea; }
.sb { display: flex; align-items: center; justify-content: center; width: 24px; height: 21px; background: #fff; border: 2px solid #93a5b2; }
.sb svg { width: 10px; height: 12px; }
.cut { width: 6px; border-right: 0; }
.track { flex: 1; display: flex; justify-content: flex-end; height: 21px; background: #fff; border: 2px solid #6c8998; }
.thumb { width: 173px; background: #93b0c0; border-left: 2px solid #6c8998; }

/* status line */
.status { display: flex; height: 27px; margin: 60px 0 7px 12px; border: 2px solid #8fa0b2; border-right: 0; background: #d9e4f3; font-size: 18px; line-height: 23px; }
.msg { flex: 1; display: flex; justify-content: flex-end; align-items: center; padding-right: 8px; }
.msg svg { width: 14px; height: 16px; }
.cell { padding-left: 7px; border-left: 2px solid #8fa0b2; white-space: nowrap; }
.sys { display: flex; align-items: center; gap: 10px; width: 154px; }
.sys svg { width: 21px; height: 19px; }
.srv { width: 98px; }
.ovr { width: 58px; }
.gap { width: 39px; }
.end { width: 4px; padding: 0; }

/* taskbar */
.taskbar {
  display: flex;
  height: 90px;
  overflow: hidden;
  background: linear-gradient(#2f7fe6 0, #3a84ee 6px, #265fdc 14px, #245cda 82px, #1c48b8 100%);
  color: #f2f7ff;
}
.start {
  display: flex;
  align-items: center;
  gap: 10px;
  width: 153px;
  height: 39px;
  margin-top: 7px;
  padding-left: 16px;
  border-radius: 0 8px 8px 0;
  background: linear-gradient(#6cb86a, #3c9a3c 20%, #379437 75%, #2a7a2c);
  font: italic 300 30px "Noto Sans CJK SC", sans-serif;
}
.start svg { width: 30px; height: 28px; }
.grip { width: 8px; margin: 15px 11px 8px 14px; background: radial-gradient(circle at 2px 2px, #12348c 1px, transparent 2px) 0 0 / 8px 10px, radial-gradient(circle at 6px 7px, #12348c 1px, transparent 2px) 0 0 / 8px 10px; }
.quick { display: grid; grid-template-columns: repeat(3, 26px); grid-auto-rows: 26px; gap: 21px 11px; padding-top: 13px; }
.quick svg { width: 26px; height: 26px; }
.tasks { flex: 1; display: grid; grid-template-columns: repeat(5, minmax(0, 1fr)); grid-auto-rows: 33px; gap: 8px 3px; margin: 11px 31px 0 0; }
.tasks button {
  display: flex;
  align-items: center;
  gap: 6px;
  padding-left: 15px;
  border-radius: 2px;
  background: linear-gradient(#4c8cf8, #3b7df4 15%, #3878f0 85%, #2c66dc);
  white-space: nowrap;
  overflow: hidden;
}
.tasks .active { background: #1d4cb4; box-shadow: inset 2px 2px 3px #143a90; }
.tasks svg { width: 25px; height: 24px; }
.tasks b, .clock b { font: 16px "Liberation Mono", monospace; white-space: pre; }
.tasks .dots { color: #a6c4f8; }
.tray {
  flex: none;
  display: flex;
  width: 165px;
  margin-top: 7px;
  background: linear-gradient(#1cb0f8 0, #0f92ec 6px, #0f94ee 76px, #0c78d0 100%);
  border-left: 2px solid #0b3fa4;
}
.chev { align-self: center; height: 28px; margin: 0 4px 0 -16px; }
.chev svg { width: 28px; height: 28px; }
.trayicons { display: grid; grid-template-columns: repeat(3, 26px); grid-auto-rows: 22px; gap: 2px 4px; padding-top: 5px; }
.trayicons svg { width: 26px; height: 22px; }
.clock { flex: none; display: flex; flex-direction: column; align-items: center; width: 90px; padding-top: 5px; line-height: 24px; }
.clock b { line-height: 24px; }
```
